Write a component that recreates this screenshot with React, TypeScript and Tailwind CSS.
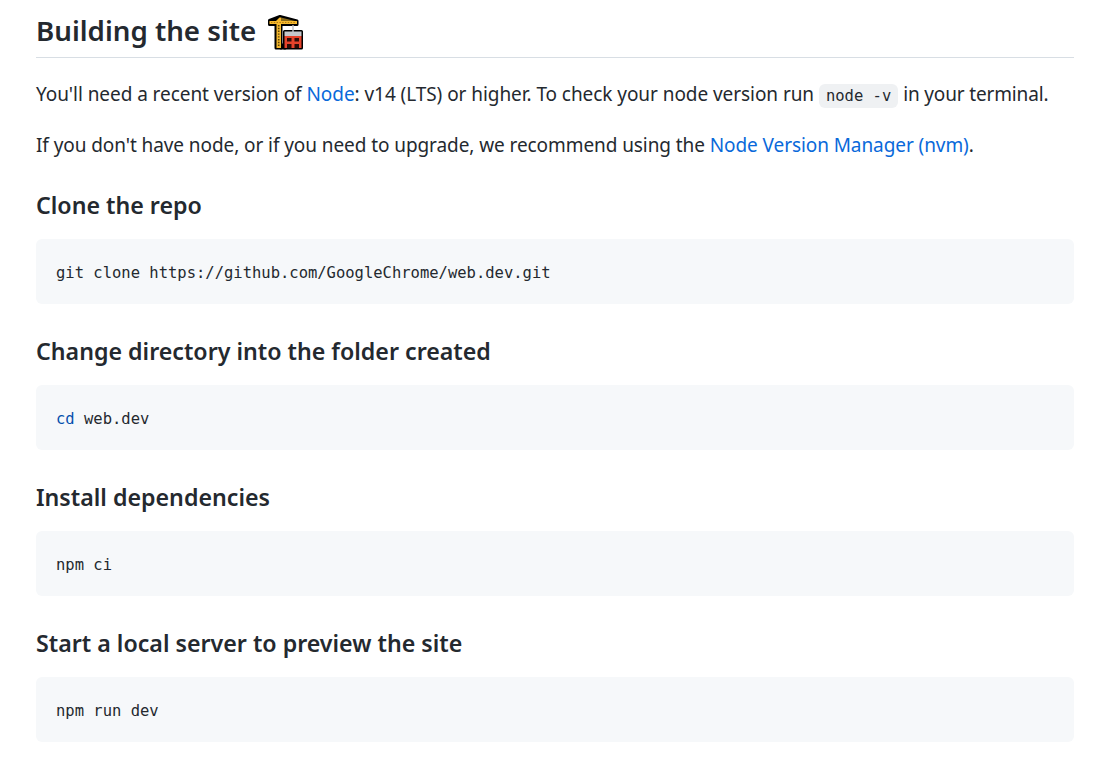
const Crane = () => (
  <svg width="37" height="37" viewBox="0 0 37 37" className="block">
    <g fill="#000" stroke="#000" strokeWidth="3" strokeLinejoin="round">
      <path d="M2.5 6.5 L13 2.5 L30 7 V10.5 H14 V34 H9 V10.5 H2.5 Z" />
      <path d="M17.5 17.5 H34.5 V34 H17.5 Z" />
      <path d="M14 31 H18 V34 H14 Z" />
    </g>
    <path d="M2.5 7 H30 V10 H2.5 Z" fill="#f6b92f" />
    <path d="M9 7 L12.5 3.5 H14 V7 Z" fill="#f6b92f" />
    <path d="M14 3.5 L28 7 H14 Z" fill="#8a6a1a" />
    <path d="M9.5 10 H14 V34 H9.5 Z" fill="#f6b92f" />
    <path d="M11.7 11 V33" stroke="#5a4208" strokeWidth="1.6" strokeDasharray="1.4 1.4" />
    <path d="M4 8.5 H28" stroke="#b57c10" strokeWidth="1" strokeDasharray="1.4 1.4" />
    <path d="M26 11 V18" stroke="#b9bdc2" strokeWidth="1.4" />
    <path d="M17.5 17.5 H34.5 V22 H17.5 Z" fill="#c5c8cc" />
    <path d="M17.5 22 H34.5 V34 H17.5 Z" fill="#e5432b" />
    <path d="M20 24 H24.5 V27.5 H20 Z M27.5 24 H32 V27.5 H27.5 Z M20 30 H24.5 V34 H20 Z M27.5 30 H32 V34 H27.5 Z" fill="#2b0d08" />
  </svg>
);

const Code = ({ children }: { children: React.ReactNode }) => (
  <pre className="h-[65px] rounded-md bg-[#f6f8fa] px-5 pt-[23px] leading-[22px] text-[#24292f]">
    <code className="font-['DejaVu_Sans_Mono',monospace] text-[15.5px]">{children}</code>
  </pre>
);

const H3 = ({ children }: { children: React.ReactNode }) => (
  <h3 className="h-[30px] leading-[30px] text-[23.2px] font-semibold text-[#24292f]">{children}</h3>
);

const Link = ({ children }: { children: React.ReactNode }) => (
  <a className="text-[#0969da]">{children}</a>
);

export default function App() {
  return (
    <div className="min-h-[761px] bg-white px-9 pt-[8px] font-['Noto_Sans',sans-serif] text-[#24292f]">
      <h1 className="w-[1038px] h-[49.5px] border-b border-[#d8dee4] flex items-start text-[27.7px] leading-[44px] font-semibold">
        <span>Building the site</span>
        <span className="mt-[6px] ml-[11px]"><Crane /></span>
      </h1>
      <div className="w-[1038px] flex flex-col">
        <p className="mt-[21px] h-[30px] leading-[30px] text-[19px] tracking-[-0.06px] whitespace-nowrap">
          You'll need a recent version of <Link>Node</Link>: v14 (LTS) or higher. To check your node version run{' '}
          <code className="rounded-md bg-[#eff1f3] px-[7px] py-[3px] font-['DejaVu_Sans_Mono',monospace] text-[15.5px] tracking-normal">node -v</code>{' '}
          <span className="tracking-[-0.15px]">in your terminal.</span>
        </p>
        <p className="mt-[21px] h-[30px] leading-[30px] text-[19px] tracking-[-0.08px] whitespace-nowrap">
          If you don't have node, or if you need to upgrade, we recommend using the <Link>Node Version Manager (nvm)</Link>.
        </p>
        <div className="mt-[30px]"><H3>Clone the repo</H3></div>
        <div className="mt-[19px]"><Code>git clone https://github.com/GoogleChrome/web.dev.git</Code></div>
        <div className="mt-[32px]"><H3>Change directory into the folder created</H3></div>
        <div className="mt-[19px]"><Code><span className="text-[#0550ae]">cd</span> web.dev</Code></div>
        <div className="mt-[32px]"><H3>Install dependencies</H3></div>
        <div className="mt-[19px]"><Code>npm ci</Code></div>
        <div className="mt-[32px]"><H3>Start a local server to preview the site</H3></div>
        <div className="mt-[19px]"><Code>npm run dev</Code></div>
      </div>
    </div>
  );
}
